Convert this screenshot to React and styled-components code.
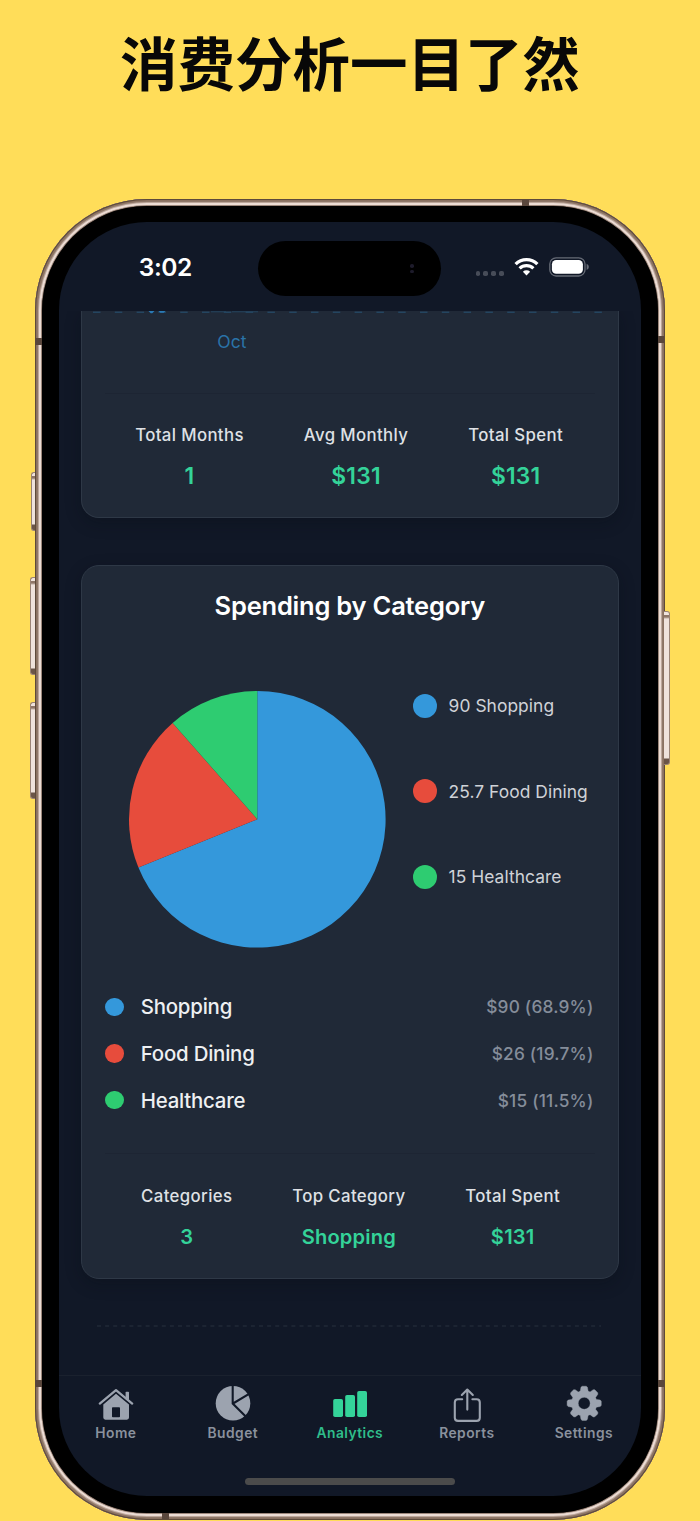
import React from "react";
import styled, { createGlobalStyle } from "styled-components";

const GlobalStyle = createGlobalStyle`
  *, *::before, *::after { box-sizing: border-box; }
  body { margin: 0; background: #ffdd59; font-family: Inter, "Liberation Sans", sans-serif; }
`;

const Poster = styled.main`
  width: 700px;
  height: 1521px;
  overflow: hidden;
  background: #ffdd59;
  display: flex;
  flex-direction: column;
  align-items: center;
`;

const Headline = styled.h1`
  margin: 0;
  height: 199px;
  padding-top: 19px;
  font: 700 57.5px/84px "Noto Sans CJK SC", sans-serif;
  color: #080808;
  white-space: nowrap;
`;

const Phone = styled.section`
  position: relative;
  width: 630px;
  height: 1320.5px;
  flex: none;
  margin-right: 1px;
  padding: 7px;
  border-radius: 112px;
  background: #2a1f18;
  box-shadow:
    inset 0 0 0 1px #5d4a3a,
    inset 0 0 0 2px #8b7160,
    inset 0 0 0 3px #8f7869,
    inset 0 0 0 4px #bda79a,
    inset 0 0 0 6px #ecdcd4,
    inset 0 0 0 7px #9c877b;
`;

const SideButton = styled.span`
  position: absolute;
  ${(p) => (p.$right ? "right" : "left")}: ${(p) => -(p.$w)}px;
  top: ${(p) => p.$top}px;
  width: ${(p) => p.$w + 0.5}px;
  height: ${(p) => p.$h}px;
  border-radius: ${(p) => (p.$right ? "0 3px 3px 0" : "3px 0 0 3px")};
  border: 1px solid #9a8375;
  border-${(p) => (p.$right ? "left" : "right")}: 0;
  background: linear-gradient(#f0e4dd 0 3px, #8f7768 3px 5px, #efe2db 7px calc(100% - 6px), #6b5548 calc(100% - 5px));
`;

const Antenna = styled.span`
  position: absolute;
  background: #5a473c;
  width: ${(p) => (p.$flat ? 7 : 6.5)}px;
  height: ${(p) => (p.$flat ? 6 : 7)}px;
  left: ${(p) => p.$x}px;
  top: ${(p) => p.$y}px;
`;

const Bezel = styled.div`
  height: 100%;
  padding: 15.5px 16.5px 16.5px 17.2px;
  border-radius: 105px;
  background: #000;
`;

const Screen = styled.div`
  position: relative;
  height: 100%;
  display: flex;
  flex-direction: column;
  overflow: hidden;
  border-radius: 88px;
  background: #111827;
`;

const StatusBar = styled.header`
  flex: none;
  height: 89.5px;
  padding: 2px 50.7px 0 80px;
  display: flex;
  align-items: center;
  justify-content: space-between;
`;

const Clock = styled.time`
  font-size: 24.5px;
  font-weight: 600;
  line-height: 30px;
  letter-spacing: -0.4px;
  color: #fff;
`;

const StatusIcons = styled.div`
  display: flex;
  align-items: center;
`;

const SignalDots = styled.div`
  display: flex;
  gap: 3px;
  margin: 13px 10.5px 0 0;
  i { width: 4.8px; height: 4.8px; border-radius: 1.8px; background: #474c58; }
`;

const Island = styled.div`
  position: absolute;
  left: 199.3px;
  top: 19.5px;
  width: 183px;
  height: 55px;
  border-radius: 28px;
  background: #000;
  display: flex;
  flex-direction: column;
  align-items: flex-end;
  justify-content: center;
  gap: 2px;
  padding: 0 27px 0 0;
  i { width: 3.5px; height: 3.5px; border-radius: 50%; background: #1d1b2b; }
`;

const Content = styled.div`
  flex: 1;
  min-height: 0;
  overflow: hidden;
  display: flex;
  flex-direction: column;
  padding: 0 22px;
`;

const Card = styled.article`
  flex: none;
  height: ${(p) => p.$h}px;
  display: flex;
  flex-direction: column;
  padding: ${(p) => (p.$cut ? "0 23.5px" : "24px 23.5px 0")};
  border: 1.5px solid #2e3846;
  border-radius: 18px;
  background: #202937;
  box-shadow: 0 5px 16px rgba(5, 12, 20, 0.3);
  ${(p) => p.$cut && "border-top: 0; border-top-left-radius: 0; border-top-right-radius: 0;"}
  & + & { margin-top: 47px; }
`;

const AxisLine = styled.svg`
  display: block;
  flex: none;
  margin: 0 -12px;
`;

const AxisLabel = styled.div`
  margin: 16px 0 0 112px;
  height: 63px;
  font-size: 17.5px;
  line-height: 24px;
  letter-spacing: 0.1px;
  color: #2a73a8;
`;

const Summary = styled.div`
  border-top: 1.5px solid #1d2533;
  padding: ${(p) => p.$pad};
  display: flex;
  justify-content: space-around;
`;

const Stat = styled.div`
  display: flex;
  flex-direction: column;
  align-items: center;
  gap: 17px;
  span { font-size: 16.8px; line-height: 24px; font-weight: 500; letter-spacing: 0.37px; color: #dfe1e5; white-space: nowrap; }
  strong { font-size: ${(p) => p.$size}px; line-height: 24px; font-weight: 600; letter-spacing: 0.2px; color: #34d399; }
`;

const CardTitle = styled.h2`
  margin: 0;
  text-align: center;
  font-size: 25.5px;
  line-height: 32px;
  font-weight: 600;
  letter-spacing: -0.22px;
  color: #fff;
`;

const ChartRow = styled.div`
  display: flex;
  height: 258px;
  margin-top: 68.5px;
  padding-left: 24px;
`;

const Chart = styled.svg`
  flex: none;
  overflow: visible;
`;

const Legend = styled.ul`
  list-style: none;
  margin: 3px 0 0 27.3px;
  padding: 0;
  li { display: flex; align-items: center; height: 24px; margin-bottom: 61.5px; gap: 11.5px;
    font-size: 17.4px; letter-spacing: 0.05px; color: #cfd2d7; white-space: nowrap; }
`;

const Dot = styled.i`
  flex: none;
  width: ${(p) => p.$size}px;
  height: ${(p) => p.$size}px;
  border-radius: 50%;
  background: ${(p) => p.$color};
`;

const Breakdown = styled.ul`
  list-style: none;
  margin: 35px 0 29.5px;
  padding: 0 1px 0 0;
`;

const BreakdownRow = styled.li`
  display: flex;
  align-items: center;
  height: 46.7px;
  b { flex: 1; margin-left: 17px; font-size: 20.4px; font-weight: 500; letter-spacing: -0.2px; color: #eef0f2; }
  span { font-size: 17.3px; font-weight: 500; letter-spacing: 0.2px; color: #858d9a; }
`;

const Separator = styled.svg`
  display: block;
  flex: none;
  margin: 46.5px 0 0 16.5px;
`;

const TabBar = styled.nav`
  flex: none;
  height: 121.5px;
  padding-top: 8.3px;
  border-top: 1.5px solid #1a212e;
  display: grid;
  grid-template-columns: repeat(5, 117px);
  justify-content: center;
  align-items: start;
`;

const Tab = styled.a`
  display: flex;
  flex-direction: column;
  align-items: center;
  color: ${(p) => (p.$active ? "#34d399" : "#9ca3af")};
  span { margin-top: -0.7px; font-size: 13.8px; line-height: 20px; font-weight: 600; letter-spacing: 0.45px;
    color: ${(p) => (p.$active ? "#2fbd8b" : "#8a919d")}; }
`;

const HomeIndicator = styled.div`
  position: absolute;
  left: 50%;
  bottom: 11px;
  width: 210px;
  height: 7.5px;
  margin-left: -105px;
  border-radius: 4px;
  background: #4b4b4b;
`;

const BLUE = "#3498db";
const RED = "#e74c3c";
const GREEN = "#2ecc71";

const categories = [
  { name: "Shopping", amount: 90, total: "$90 (68.9%)", color: BLUE },
  { name: "Food Dining", amount: 25.7, total: "$26 (19.7%)", color: RED },
  { name: "Healthcare", amount: 15, total: "$15 (11.5%)", color: GREEN },
];

function PieChart({ data, r }) {
  const sum = data.reduce((a, d) => a + d.amount, 0);
  const at = (t) => [r + r * Math.sin(t * 2 * Math.PI), r - r * Math.cos(t * 2 * Math.PI)].join(" ");
  let start = 0;
  return (
    <Chart width={2 * r} height={2 * r}>
      {data.map((d) => {
        const end = start + d.amount / sum;
        const path = `M${r} ${r}L${at(start)}A${r} ${r} 0 ${end - start > 0.5 ? 1 : 0} 1 ${at(end)}Z`;
        start = end;
        return <path key={d.name} d={path} fill={d.color} />;
      })}
    </Chart>
  );
}

function gearPath(cx, cy) {
  const pts = [];
  for (let i = 0; i < 8; i++) {
    const a = (i * Math.PI) / 4;
    [[-0.31, 12.8], [-0.2, 16.4], [-0.12, 17.2], [0.12, 17.2], [0.2, 16.4], [0.31, 12.8]].forEach(([o, r]) =>
      pts.push(`${(cx + r * Math.sin(a + o)).toFixed(2)} ${(cy - r * Math.cos(a + o)).toFixed(2)}`)
    );
  }
  return `M${pts.join("L")}Z`;
}

const icons = {
  Home: (
    <>
      <path d="M3.8 19.6 20 6.2 36.2 19.6" fill="none" stroke="currentColor" strokeWidth="2.3" strokeLinecap="round" strokeLinejoin="round" />
      <path d="M29.6 8.5q0-.8.8-.8h1.8q.8 0 .8.8v7.7l-3.4-2.8z" fill="currentColor" />
      <path fillRule="evenodd" fill="currentColor" d="M20 9.8 33 20.5V33.6q0 2.1-2.1 2.1H9.4q-2.1 0-2.1-2.1V20.5zM16.8 23.3q-.8 0-.8.8v8.4q0 .8.8.8h6.4q.8 0 .8-.8v-8.4q0-.8-.8-.8z" />
    </>
  ),
  Budget: (
    <>
      <circle cx="20" cy="19.3" r="17.3" fill="currentColor" />
      <path d="M19.7 1V19.5L34.5 34.3M20 19.5 36.5 9.6" fill="none" stroke="#111827" strokeWidth="2.1" />
    </>
  ),
  Analytics: (
    <g fill="currentColor">
      <rect x="3.2" y="15" width="9.8" height="18" rx="1.8" />
      <rect x="15.2" y="11" width="9.8" height="22" rx="1.8" />
      <rect x="27.2" y="7" width="9.8" height="26" rx="1.8" />
    </g>
  ),
  Reports: (
    <g fill="none" stroke="currentColor" strokeWidth="2.1" strokeLinecap="round" strokeLinejoin="round">
      <path d="M15.2 15.3H11Q7.8 15.3 7.8 18.5V33.7Q7.8 36.9 11 36.9H29.6Q32.8 36.9 32.8 33.7V18.5Q32.8 15.3 29.6 15.3H25.4" />
      <path d="M20.3 25.6V5.6M14.8 11 20.3 5.5 25.8 11" />
    </g>
  ),
  Settings: (
    <path fillRule="evenodd" fill="currentColor" stroke="currentColor" strokeWidth=".4" strokeLinejoin="round" d={gearPath(20.2, 19.3) + "M26.2 19.3a6 6 0 1 0-12 0a6 6 0 1 0 12 0Z"} />
  ),
};

function StatRow({ items, size, pad }) {
  return (
    <Summary $pad={pad}>
      {items.map(([label, value]) => (
        <Stat key={label} $size={size}>
          <span>{label}</span>
          <strong>{value}</strong>
        </Stat>
      ))}
    </Summary>
  );
}

export default function App() {
  return (
    <Poster>
      <GlobalStyle />
      <Headline>消费分析一目了然</Headline>
      <Phone>
        <SideButton $w={4} $top={273} $h={59} />
        <SideButton $w={5} $top={378} $h={98} />
        <SideButton $w={5} $top={503} $h={97} />
        <SideButton $right $w={5} $top={412} $h={154} />
        <Antenna $x={0.5} $y={138.5} />
        <Antenna $x={0.5} $y={1181} />
        <Antenna $x={623} $y={137} />
        <Antenna $x={623} $y={1181} />
        <Antenna $flat $x={487.5} $y={0.5} />
        <Antenna $flat $x={127} $y={1314} />
        <Bezel>
          <Screen>
            <StatusBar>
              <Clock>3:02</Clock>
              <StatusIcons>
                <SignalDots><i /><i /><i /><i /></SignalDots>
                <svg width="25" height="20" viewBox="0 0 25 20" fill="none" stroke="#fff">
                  <path d="M1.6 7.1a15.6 15.6 0 0 1 21.8 0" strokeWidth="3.3" />
                  <path d="M5.6 11.4a9.9 9.9 0 0 1 13.8 0" strokeWidth="3.2" />
                  <path d="M8.9 14.8a5.2 5.2 0 0 1 7.2 0L12.5 18.6z" fill="#fff" stroke="none" />
                </svg>
                <svg width="41" height="20" viewBox="0 0 41 20" style={{ marginLeft: 10 }}>
                  <rect x=".8" y=".8" width="35.2" height="18.2" rx="6.3" fill="none" stroke="#666b76" strokeWidth="1.3" />
                  <rect x="2.9" y="3" width="31" height="13.8" rx="4.3" fill="#fff" />
                  <path d="M37.6 6.8q2.3 1 2.3 3.1t-2.3 3.1z" fill="#666b76" />
                </svg>
              </StatusIcons>
            </StatusBar>
            <Island><i /><i /></Island>
            <Content>
              <Card $cut $h={207}>
                <AxisLine width="514" height="3">
                  <path d="M0 1.2H511" stroke="#244560" strokeWidth="1.6" strokeDasharray="7.5 14.3" />
                  <path d="M118 .8H133M139 .8H165" stroke="#244560" strokeWidth="1" />
                  <path d="M55.5 0h6l-2.2 2.2h-1.6zM65.5 0h7l-1.8 1.8h-3.4z" fill="#2a7ab5" />
                </AxisLine>
                <AxisLabel>Oct</AxisLabel>
                <StatRow size={22.8} pad="29px 1.5px 0 0" items={[["Total Months", "1"], ["Avg Monthly", "$131"], ["Total Spent", "$131"]]} />
              </Card>
              <Card $h={713.5}>
                <CardTitle>Spending by Category</CardTitle>
                <ChartRow>
                  <PieChart data={categories} r={128.3} />
                  <Legend>
                    {categories.map((c) => (
                      <li key={c.name}><Dot $size={24} $color={c.color} />{c.amount} {c.name}</li>
                    ))}
                  </Legend>
                </ChartRow>
                <Breakdown>
                  {categories.map((c) => (
                    <BreakdownRow key={c.name}>
                      <Dot $size={18.5} $color={c.color} /><b>{c.name}</b><span>{c.total}</span>
                    </BreakdownRow>
                  ))}
                </Breakdown>
                <StatRow size={20.1} pad="30px 4.5px 0 6px" items={[["Categories", "3"], ["Top Category", "Shopping"], ["Total Spent", "$131"]]} />
              </Card>
              <Separator width="504" height="2">
                <path d="M0 1H504" stroke="#202937" strokeWidth="1.3" strokeDasharray="4 4.1" />
              </Separator>
            </Content>
            <TabBar>
              {Object.keys(icons).map((name) => (
                <Tab key={name} $active={name === "Analytics"}>
                  <svg width="40" height="40" viewBox="0 0 40 40">{icons[name]}</svg>
                  <span>{name}</span>
                </Tab>
              ))}
            </TabBar>
            <HomeIndicator />
          </Screen>
        </Bezel>
      </Phone>
    </Poster>
  );
}
